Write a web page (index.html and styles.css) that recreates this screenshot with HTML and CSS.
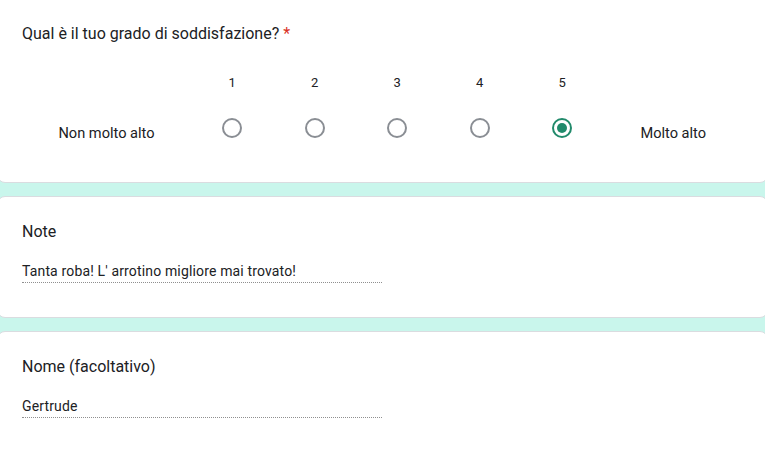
FILE: index.html
```html
<!DOCTYPE html>
<html lang="it">
<head>
<meta charset="utf-8">
<link rel="stylesheet" href="styles.css">
</head>
<body>
<div class="stack">
  <section class="card card-first">
    <div class="q-title">Qual è il tuo grado di soddisfazione? <span class="req">*</span></div>
    <div class="scale">
      <div class="cell"></div>
      <div class="cell num">1</div>
      <div class="cell num">2</div>
      <div class="cell num">3</div>
      <div class="cell num">4</div>
      <div class="cell num">5</div>
      <div class="cell"></div>
      <div class="cell anchor">Non molto alto</div>
      <div class="cell"><span class="radio"></span></div>
      <div class="cell"><span class="radio"></span></div>
      <div class="cell"><span class="radio"></span></div>
      <div class="cell"><span class="radio"></span></div>
      <div class="cell"><span class="radio checked"></span></div>
      <div class="cell anchor">Molto alto</div>
    </div>
  </section>
  <section class="card">
    <div class="q-title">Note</div>
    <div class="answer">Tanta roba! L' arrotino migliore mai trovato!</div>
  </section>
  <section class="card card-last">
    <div class="q-title">Nome (facoltativo)</div>
    <div class="answer">Gertrude</div>
  </section>
</div>
</body>
</html>
```
FILE: styles.css
```css
html, body {
  margin: 0;
  padding: 0;
}
body {
  background: #c9f6ec;
  font-family: Roboto, "Liberation Sans", sans-serif;
  color: #202124;
  overflow: hidden;
  height: 450px;
}
.stack {
  display: flex;
  flex-direction: column;
  gap: 13px;
  margin: -10px -3px 0 -3px;
}
.card {
  background: #fff;
  border: 1px solid #dadce0;
  border-radius: 8px;
  padding: 0 24px 0 24px;
}
.card-first {
  padding-top: 31px;
  padding-bottom: 24px;
}
.card + .card {
  padding-top: 23px;
  padding-bottom: 34px;
}
.card-last {
  min-height: 200px;
}
.q-title {
  font-size: 16px;
  line-height: 24px;
}
.req {
  color: #d93025;
}
.scale {
  display: grid;
  grid-template-columns: 169px repeat(5, 82.5px) 1fr;
  grid-template-rows: 32px 60px;
  margin-top: 20px;
}
.cell {
  display: flex;
  align-items: center;
  justify-content: center;
  font-size: 13px;
}
.anchor {
  font-size: 14.6px;
  padding-top: 10px;
}
.radio {
  width: 16px;
  height: 16px;
  border: 2px solid #8a8e94;
  border-radius: 50%;
  display: flex;
  align-items: center;
  justify-content: center;
}
.radio.checked {
  border-color: #218a6b;
}
.radio.checked::after {
  content: "";
  width: 10px;
  height: 10px;
  border-radius: 50%;
  background: #218a6b;
}
.answer {
  margin-top: 17px;
  width: 360px;
  font-size: 14px;
  letter-spacing: 0.15px;
  line-height: 20px;
  border-bottom: 1px dotted #8f8f8f;
  padding-bottom: 1px;
}
```
